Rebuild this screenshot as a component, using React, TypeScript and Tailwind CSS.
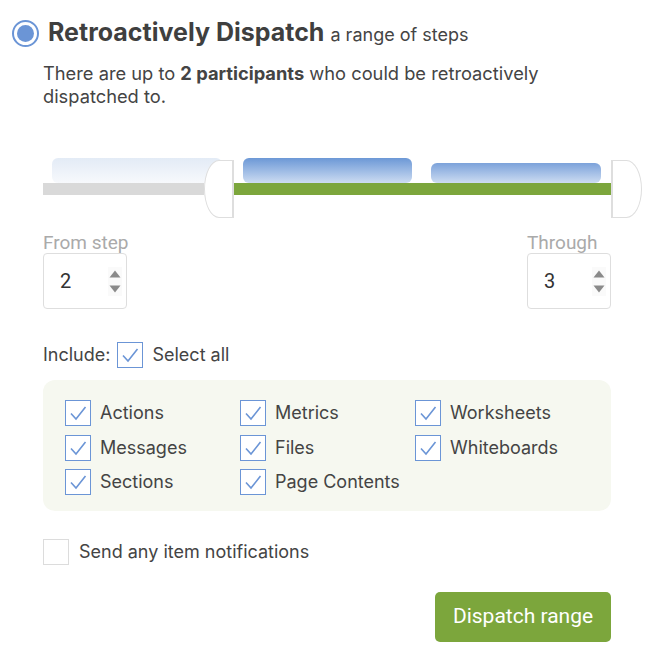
import React from "react";

const items = [
  "Actions",
  "Metrics",
  "Worksheets",
  "Messages",
  "Files",
  "Whiteboards",
  "Sections",
  "Page Contents",
];

function Check({ checked = true }: { checked?: boolean }) {
  return (
    <span
      className={`flex h-[26px] w-[26px] shrink-0 items-center justify-center border bg-white ${
        checked ? "border-[#6b95d6]" : "border-[#dcdcdc]"
      }`}
    >
      {checked && (
        <svg width="20" height="20" viewBox="0 0 20 20" fill="none">
          <path d="M3 10.5 L8 16 L17.5 4" stroke="#6b95d6" strokeWidth="1.6" />
        </svg>
      )}
    </span>
  );
}

function Spinner({ value }: { value: string }) {
  return (
    <div className="flex h-[56px] w-[84px] items-center rounded border border-[#dedede] bg-white pl-[16px] pr-[4px]">
      <span className="flex-1 text-[20px] text-[#333]">{value}</span>
      <span className="flex flex-col items-center gap-[7px] bg-[#fafafa] px-[1px] py-[3px]">
        <svg width="12" height="8" viewBox="0 0 12 8">
          <path d="M6 0.5 L11.5 7.5 L0.5 7.5 Z" fill="#8a8a8a" />
        </svg>
        <svg width="12" height="8" viewBox="0 0 12 8">
          <path d="M0.5 0.5 L11.5 0.5 L6 7.5 Z" fill="#8a8a8a" />
        </svg>
      </span>
    </div>
  );
}

export default function App() {
  return (
    <div className="min-h-screen bg-white font-['Inter',sans-serif] text-[#444]">
      {/* Header */}
      <div className="flex items-center pl-[12px] pt-[17px]">
        <span className="flex h-[27px] w-[27px] items-center justify-center rounded-full border-2 border-[#6b95d6] bg-white">
          <span className="h-[17px] w-[17px] rounded-full bg-[#6b95d6]" />
        </span>
        <h1 className="ml-[9px] text-[25px] font-bold leading-[30px] text-[#3f3f3f]">
          Retroactively Dispatch
          <span className="ml-[6px] text-[18px] font-normal text-[#444]">a range of steps</span>
        </h1>
      </div>

      <div className="mx-[43px] w-[568px]">
        <p className="mt-[12px] text-[18.3px] leading-[23px]">
          There are up to <b className="font-bold">2 participants</b> who could be retroactively dispatched to.
        </p>

        {/* Range slider */}
        <div className="relative mt-[49px] h-[61px] w-[600px]">
          <div className="flex h-[26px] items-end">
            <div className="ml-[9px] h-[25px] w-[170px] rounded-[6px] bg-gradient-to-b from-[#e3ebf6] to-[#f7f9fc]" />
            <div className="ml-[21px] h-[25px] w-[169px] rounded-[6px] bg-gradient-to-b from-[#6c98d6] to-[#cddcf1]" />
            <div className="ml-[19px] h-[20px] w-[170px] rounded-[6px] bg-gradient-to-b from-[#7ca2da] to-[#cddcf1]" />
          </div>
          <div className="flex h-[12px]">
            <div className="w-[161px] bg-[#d9d9d9]" />
            <div className="w-[30px]" />
            <div className="w-[377px] bg-[#7ca63c]" />
          </div>
          <div className="absolute left-[161px] top-[3px] h-[58px] w-[30px] rounded-l-[100%] border border-r-2 border-[#dedede] bg-white" />
          <div className="absolute left-[568px] top-[3px] h-[58px] w-[31px] rounded-r-[100%] border border-l-2 border-[#dedede] bg-white" />
        </div>

        {/* Step range */}
        <div className="mt-[15px] flex justify-between font-['Roboto',sans-serif]">
          <div>
            <div className="text-[19px] leading-[20px] text-[#aaa]">From step</div>
            <Spinner value="2" />
          </div>
          <div>
            <div className="text-[19px] leading-[20px] text-[#aaa]">Through</div>
            <Spinner value="3" />
          </div>
        </div>

        {/* Include */}
        <div className="mt-[33px] flex items-center text-[18px] leading-[26px]">
          <span>Include:</span>
          <span className="ml-[7px]">
            <Check />
          </span>
          <span className="ml-[9px]">Select all</span>
        </div>

        <div className="mt-[12px] grid grid-cols-[175px_175px_1fr] gap-y-[8.5px] rounded-[12px] bg-[#f6f8f0] pb-[16px] pl-[22px] pt-[20px]">
          {items.map((name) => (
            <label key={name} className="flex items-center gap-[9px] text-[18px] leading-[26px]">
              <Check />
              {name}
            </label>
          ))}
        </div>

        <div className="mt-[28px] flex items-center gap-[10px] text-[18px] leading-[26px]">
          <Check checked={false} />
          Send any item notifications
        </div>

        <div className="mt-[27px] flex justify-end">
          <button className="h-[50px] w-[176px] rounded-[5px] bg-[#7ca63c] font-['Roboto',sans-serif] text-[21px] text-white">
            Dispatch range
          </button>
        </div>
      </div>
    </div>
  );
}
